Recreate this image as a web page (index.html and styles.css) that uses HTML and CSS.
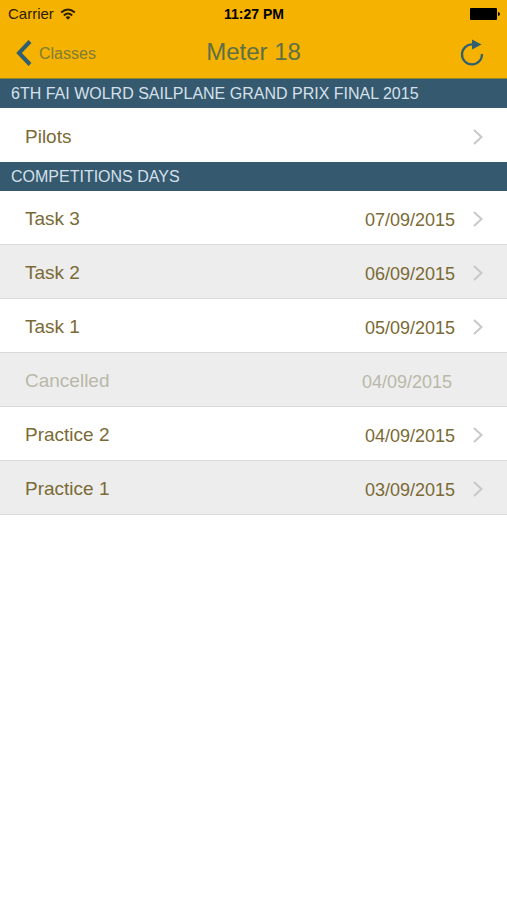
FILE: index.html
```
<!DOCTYPE html>
<html lang="en">
<head>
    <meta charset="UTF-8">
    <meta name="viewport" content="width=device-width, initial-scale=1.0">
    <title>Meter 18</title>
    <link rel="stylesheet" href="styles.css">
</head>
<body>
    <svg class="symbols" aria-hidden="true">
        <symbol id="chevron" viewBox="0 0 10 16">
            <path d="M1 1 L8.5 8 L1 15" fill="none" stroke="currentColor" stroke-width="2"/>
        </symbol>
    </svg>

    <header class="top">
        <div class="status-bar">
            <div class="carrier">
                <span>Carrier</span>
                <svg class="wifi" viewBox="0 0 16 12" aria-hidden="true">
                    <path d="M1.2 4.6 Q8 -1.6 14.8 4.6" fill="none" stroke="currentColor" stroke-width="2"/>
                    <path d="M3.8 7.5 Q8 3.6 12.2 7.5" fill="none" stroke="currentColor" stroke-width="1.9"/>
                    <path d="M5.6 9.3 Q8 7.1 10.4 9.3 L8 11.7 Z" fill="currentColor"/>
                </svg>
            </div>
            <span class="time">11:27 PM</span>
            <svg class="battery" viewBox="0 0 30 12" aria-hidden="true">
                <rect x="0" y="0" width="27" height="12" rx="1"/>
                <path d="M28 4 Q30 4.4 30 6 Q30 7.6 28 8 Z"/>
            </svg>
        </div>
        <nav class="nav-bar">
            <a href="#" class="back">
                <svg class="back-icon" viewBox="0 0 16 26" aria-hidden="true">
                    <path d="M14 1.5 L3 13 L14 24.5" fill="none" stroke="currentColor" stroke-width="4"/>
                </svg>
                <span>Classes</span>
            </a>
            <h1>Meter 18</h1>
            <button type="button" class="refresh" aria-label="Refresh">
                <svg viewBox="0 0 24 28" aria-hidden="true">
                    <path d="M12.5 5.4 A10 10 0 1 0 22 15" fill="none" stroke="currentColor" stroke-width="2.2"/>
                    <path d="M12 0.5 L21.5 5.4 L12 10.5 Z" fill="currentColor"/>
                </svg>
            </button>
        </nav>
    </header>

    <main>
        <section>
            <h2>6TH FAI WOLRD SAILPLANE GRAND PRIX FINAL 2015</h2>
            <ul class="list">
                <li>
                    <a href="#" class="row">
                        <span class="name">Pilots</span>
                        <svg class="chevron" aria-hidden="true"><use href="#chevron"/></svg>
                    </a>
                </li>
            </ul>
        </section>

        <section>
            <h2>COMPETITIONS DAYS</h2>
            <ul class="list days">
                <li>
                    <a href="#" class="row">
                        <span class="name">Task 3</span>
                        <span class="date">07/09/2015</span>
                        <svg class="chevron" aria-hidden="true"><use href="#chevron"/></svg>
                    </a>
                </li>
                <li>
                    <a href="#" class="row">
                        <span class="name">Task 2</span>
                        <span class="date">06/09/2015</span>
                        <svg class="chevron" aria-hidden="true"><use href="#chevron"/></svg>
                    </a>
                </li>
                <li>
                    <a href="#" class="row">
                        <span class="name">Task 1</span>
                        <span class="date">05/09/2015</span>
                        <svg class="chevron" aria-hidden="true"><use href="#chevron"/></svg>
                    </a>
                </li>
                <li>
                    <div class="row cancelled">
                        <span class="name">Cancelled</span>
                        <span class="date">04/09/2015</span>
                    </div>
                </li>
                <li>
                    <a href="#" class="row">
                        <span class="name">Practice 2</span>
                        <span class="date">04/09/2015</span>
                        <svg class="chevron" aria-hidden="true"><use href="#chevron"/></svg>
                    </a>
                </li>
                <li>
                    <a href="#" class="row">
                        <span class="name">Practice 1</span>
                        <span class="date">03/09/2015</span>
                        <svg class="chevron" aria-hidden="true"><use href="#chevron"/></svg>
                    </a>
                </li>
            </ul>
        </section>
    </main>
</body>
</html>
```

FILE: styles.css
```
* {
    margin: 0;
    padding: 0;
    box-sizing: border-box;
}

body {
    font-family: "Liberation Sans", Arial, sans-serif;
    background-color: #fff;
    min-height: 100vh;
}

.symbols {
    display: none;
}

.top {
    background-color: #f5b200;
    border-bottom: 1px solid #8a8a35;
}

.status-bar {
    display: grid;
    grid-template-columns: 1fr auto 1fr;
    align-items: center;
    height: 27px;
    padding: 0 7px 0 8px;
    color: #000;
}

.carrier {
    display: flex;
    align-items: center;
    gap: 6px;
    font-size: 15px;
    color: #2b2000;
}

.wifi {
    width: 16px;
    height: 12px;
}

.time {
    font-size: 14px;
    font-weight: bold;
}

.battery {
    width: 30px;
    height: 12px;
    justify-self: end;
}

.nav-bar {
    display: grid;
    grid-template-columns: 1fr auto 1fr;
    align-items: center;
    height: 51px;
    padding: 0 16px;
    color: #2f5f70;
}

.back {
    display: flex;
    align-items: center;
    gap: 7px;
    color: #2f5f70;
    text-decoration: none;
    font-size: 16px;
}

.back span {
    padding-top: 2px;
    color: #7f7c38;
}

.back-icon {
    width: 16px;
    height: 26px;
}

.nav-bar h1 {
    padding-bottom: 2px;
    font-size: 24px;
    font-weight: normal;
    color: #5d7048;
}

.refresh {
    justify-self: end;
    width: 24px;
    height: 28px;
    margin-right: 7px;
    border: none;
    background: none;
    color: #2f5f70;
    cursor: pointer;
}

.refresh svg {
    display: block;
    width: 24px;
    height: 28px;
}

h2 {
    padding: 1px 11px 0;
    background-color: #35596f;
    color: #d5e0ea;
    font-size: 16px;
    font-weight: normal;
    line-height: 28px;
}

.list {
    list-style: none;
}

.row {
    display: flex;
    align-items: center;
    height: 54px;
    padding: 3px 24px 0 25px;
    color: #7a6a35;
    text-decoration: none;
}

.days .row {
    border-bottom: 1px solid #d9d9d9;
}

.days li:nth-child(even) {
    background-color: #ededed;
}

.name {
    flex: 1;
    font-size: 19px;
}

.date {
    padding-top: 2px;
    font-size: 18px;
}

.chevron {
    width: 10px;
    height: 16px;
    margin-left: 18px;
    color: #c7c7cc;
}

.days .cancelled {
    padding-right: 55px;
    color: #bab8a9;
}
```
